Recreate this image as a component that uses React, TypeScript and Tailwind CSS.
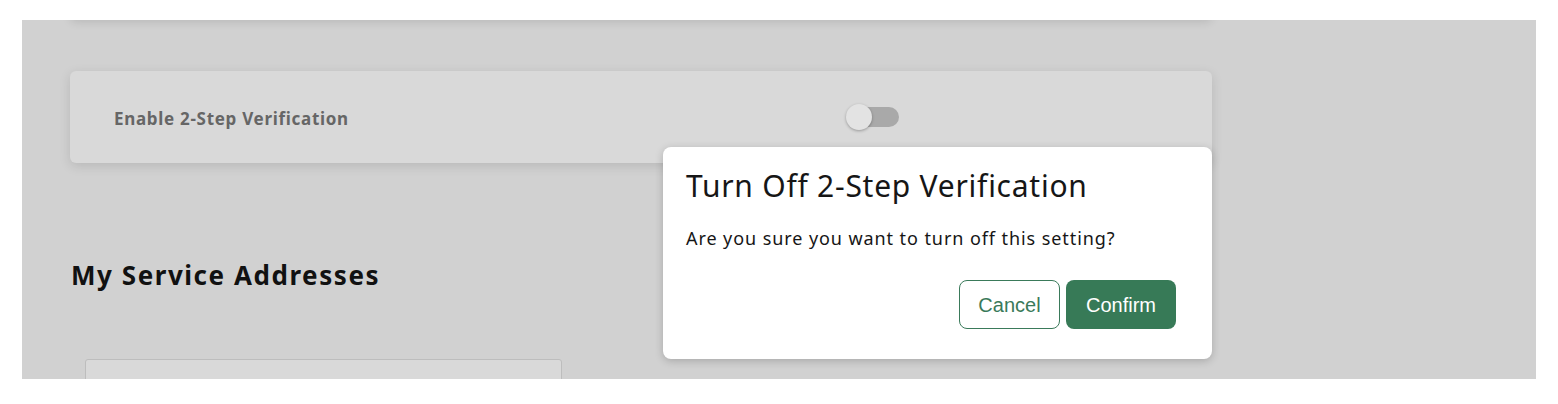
import React from "react";

export default function App() {
  return (
    <div className="relative w-[1558px] h-[404px] bg-white overflow-hidden" style={{ fontFamily: "'Noto Sans', 'Open Sans', sans-serif" }}>
      <div className="absolute left-[22px] top-[20px] w-[1514px] h-[359px] bg-[#d1d1d1] overflow-hidden">
        <div className="pl-[48px] w-[1190px]">
          <div className="h-[10px] -mt-[10px] rounded-b-[6px] bg-[#d9d9d9] shadow-[0_2px_10px_rgba(0,0,0,0.12)]" />
          <div className="mt-[51px] h-[92px] rounded-[6px] bg-[#d9d9d9] shadow-[0_3px_12px_rgba(0,0,0,0.12)] flex items-center pl-[44px]">
            <div className="w-[732px] pt-[3px] text-[17px] font-bold text-[#666666] tracking-[0.7px]">Enable 2-Step Verification</div>
            <div className="relative w-[54px] h-[26px] flex items-center">
              <div className="ml-[2px] w-[51px] h-[20px] rounded-full bg-[#a9a9a9]" />
              <div className="absolute left-0 top-0 w-[26px] h-[26px] rounded-full bg-[#e3e3e3] shadow-[0_1px_3px_rgba(0,0,0,0.3)]" />
            </div>
          </div>
          <h2 className="mt-[97px] ml-[1px] text-[26px] font-bold text-[#111111] tracking-[1.55px] leading-[30px]">My Service Addresses</h2>
          <div className="mt-[69px] ml-[15px] w-[477px] h-[40px] bg-[#d9d9d9] border border-[#bdbdbd] rounded-[3px]" />
        </div>
      </div>
      <div className="absolute left-[663px] top-[147px] w-[549px] h-[212px] bg-white rounded-[8px] shadow-[0_2px_8px_rgba(0,0,0,0.2)] px-[23px] pt-[20px]">
        <div className="text-[30px] leading-[38px] text-[#161616] tracking-[0.75px]">Turn Off 2-Step Verification</div>
        <div className="mt-[20px] text-[18px] leading-[26px] text-[#161616] tracking-[0.92px]">Are you sure you want to turn off this setting?</div>
        <div className="mt-[29px] flex justify-end gap-[6px] pr-[13px]" style={{ fontFamily: "'Liberation Sans', Arial, sans-serif" }}>
          <button className="w-[101px] h-[49px] rounded-[8px] border border-[#3a7a5a] bg-white text-[#3a7a5a] text-[20px]">Cancel</button>
          <button className="w-[110px] h-[49px] rounded-[8px] bg-[#377a57] text-white text-[20px]">Confirm</button>
        </div>
      </div>
    </div>
  );
}
